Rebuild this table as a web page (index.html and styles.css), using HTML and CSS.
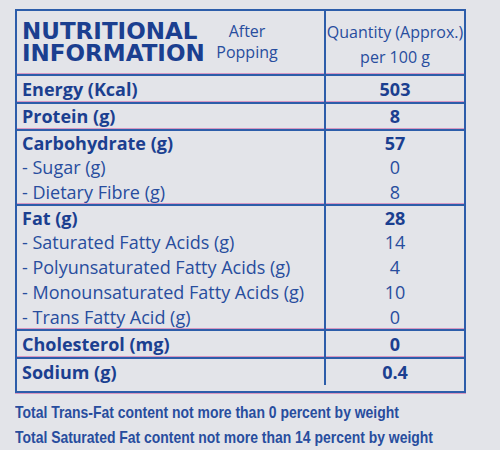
FILE: index.html
```html
<!DOCTYPE html>
<html lang="en">
<head>
    <meta charset="UTF-8">
    <meta name="viewport" content="width=device-width, initial-scale=1.0">
    <title>Nutritional Information</title>
    <link rel="stylesheet" href="styles.css">
</head>
<body>
    <!-- nutrition panel -->
    <div class="panel">
        <div class="line head">
            <div class="label head-label">
                <h1 class="title">NUTRITIONAL<br>INFORMATION</h1>
                <p class="after">After<br>Popping</p>
            </div>
            <div class="qty head-qty">Quantity (Approx.)<br>per 100 g</div>
        </div>

        <div class="line group single bold">
            <div class="label">Energy (Kcal)</div>
            <div class="qty">503</div>
        </div>
        <div class="line group single bold">
            <div class="label">Protein (g)</div>
            <div class="qty">8</div>
        </div>

        <div class="line group sub bold">
            <div class="label">Carbohydrate (g)</div>
            <div class="qty">57</div>
        </div>
        <div class="line sub">
            <div class="label">- Sugar (g)</div>
            <div class="qty">0</div>
        </div>
        <div class="line sub">
            <div class="label">- Dietary Fibre (g)</div>
            <div class="qty">8</div>
        </div>

        <div class="line group sub bold">
            <div class="label">Fat (g)</div>
            <div class="qty">28</div>
        </div>
        <div class="line sub">
            <div class="label">- Saturated Fatty Acids (g)</div>
            <div class="qty">14</div>
        </div>
        <div class="line sub">
            <div class="label">- Polyunsaturated Fatty Acids (g)</div>
            <div class="qty">4</div>
        </div>
        <div class="line sub">
            <div class="label">- Monounsaturated Fatty Acids (g)</div>
            <div class="qty">10</div>
        </div>
        <div class="line sub">
            <div class="label">- Trans Fatty Acid (g)</div>
            <div class="qty">0</div>
        </div>

        <div class="line group single bold">
            <div class="label">Cholesterol (mg)</div>
            <div class="qty">0</div>
        </div>
        <div class="line group single bold last">
            <div class="label">Sodium (g)</div>
            <div class="qty">0.4</div>
        </div>
    </div>

    <!-- notes -->
    <div class="notes">
        <p>Total Trans-Fat content not more than 0 percent by weight</p>
        <p>Total Saturated Fat content not more than 14 percent by weight</p>
    </div>
</body>
</html>
```

FILE: styles.css
```css
/* base */
:root {
    --ink: #284d9e;
    --ink-dark: #1b3f90;
    --rule: #2d5daa;
    --pink: rgba(210, 120, 175, 0.7);
    --paper: #e3e4e9;
}

* {
    margin: 0;
    padding: 0;
    box-sizing: border-box;
}

body {
    background: var(--paper);
    color: var(--ink);
    font-family: 'Open Sans', 'Liberation Sans', sans-serif;
    font-size: 18px;
    width: 500px;
    height: 450px;
    overflow: hidden;
    padding-top: 9px;
}

/* panel */
.panel {
    margin-left: 15px;
    width: 451px;
    border: 2px solid var(--rule);
    box-shadow: 0 1px 0 var(--pink);
}

.line {
    display: grid;
    grid-template-columns: 307px 1fr;
}

.label {
    padding-left: 5px;
    display: flex;
    align-items: center;
    white-space: nowrap;
}

.qty {
    border-left: 2px solid var(--rule);
    display: flex;
    align-items: center;
    justify-content: center;
}

.group {
    border-top: 2px solid var(--rule);
    box-shadow: 0 -1px 0 var(--pink);
}

.single {
    height: 27.5px;
}

.sub {
    height: 25px;
}

.last {
    height: 34px;
    padding-bottom: 6px;
}

.bold {
    font-weight: 700;
    color: var(--ink-dark);
}

/* header */
.head {
    height: 63px;
    font-size: 16px;
}

.head-label {
    justify-content: space-between;
    align-items: flex-start;
    padding-top: 9px;
}

.title {
    font-family: 'DejaVu Sans', sans-serif;
    font-weight: 700;
    font-size: 23px;
    line-height: 22px;
    color: var(--ink-dark);
}

.after {
    width: 80px;
    text-align: center;
    line-height: 21px;
    margin-top: 1px;
    margin-right: 37px;
}

.head-qty {
    text-align: center;
    line-height: 25px;
    align-items: flex-start;
    padding-top: 9px;
}

/* notes under the panel */
.notes {
    margin-top: 7px;
    margin-left: 15px;
    font-family: 'Liberation Sans', sans-serif;
    font-weight: 700;
    font-size: 17px;
    line-height: 25px;
    color: var(--ink);
    white-space: nowrap;
}

.notes p {
    transform: scaleX(0.82);
    transform-origin: left center;
}
```
